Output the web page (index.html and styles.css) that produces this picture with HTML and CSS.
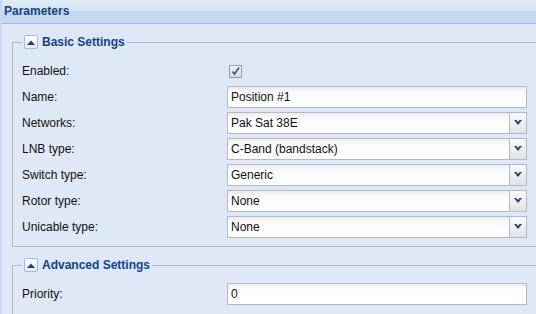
FILE: index.html
```html
<!DOCTYPE html>
<html lang="en">
<head>
    <meta charset="UTF-8">
    <title>Parameters</title>
    <link rel="stylesheet" href="styles.css">
</head>
<body>
    <div class="panel">
        <div class="panel-header">Parameters</div>
        <div class="panel-body">

            <!-- Basic settings -->
            <fieldset class="group">
                <legend><span class="toggle"><svg width="8" height="5" viewBox="0 0 8 5"><polygon points="0,5 4,0.5 8,5" fill="#1e3f7a"/></svg></span>Basic Settings</legend>
                <div class="row">
                    <label>Enabled:</label>
                    <span class="check"><svg width="11" height="11" viewBox="0 0 11 11"><path d="M2.5 5.5 L4.5 8 L9 1.5" fill="none" stroke="#3a5aa6" stroke-width="1.8"/></svg></span>
                </div>
                <div class="row">
                    <label>Name:</label>
                    <div class="field">Position #1</div>
                </div>
                <div class="row">
                    <label>Networks:</label>
                    <div class="field combo">Pak Sat 38E<span class="trigger"></span></div>
                </div>
                <div class="row">
                    <label>LNB type:</label>
                    <div class="field combo">C-Band (bandstack)<span class="trigger"></span></div>
                </div>
                <div class="row">
                    <label>Switch type:</label>
                    <div class="field combo">Generic<span class="trigger"></span></div>
                </div>
                <div class="row">
                    <label>Rotor type:</label>
                    <div class="field combo">None<span class="trigger"></span></div>
                </div>
                <div class="row">
                    <label>Unicable type:</label>
                    <div class="field combo">None<span class="trigger"></span></div>
                </div>
            </fieldset>

            <!-- Advanced settings -->
            <fieldset class="group">
                <legend><span class="toggle"><svg width="8" height="5" viewBox="0 0 8 5"><polygon points="0,5 4,0.5 8,5" fill="#1e3f7a"/></svg></span>Advanced Settings</legend>
                <div class="row">
                    <label>Priority:</label>
                    <div class="field">0</div>
                </div>
            </fieldset>

        </div>
    </div>
</body>
</html>
```

FILE: styles.css
```css
* {
    margin: 0;
    padding: 0;
    box-sizing: border-box;
}

html, body {
    width: 536px;
    height: 314px;
    overflow: hidden;
}

body {
    font-family: "Liberation Sans", Arial, sans-serif;
    font-size: 12px;
    color: #111;
    background: #dfe8f6;
}

.panel {
    border-left: 2px solid #c9d8ee;
    min-height: 314px;
}

.panel-header {
    height: 24px;
    padding: 0 2px;
    line-height: 23px;
    font-weight: bold;
    color: #15428b;
    background: linear-gradient(#e3ecf8 0, #d8e5f6 44%, #c4d8f1 48%, #c6d9f1 100%);
    border-bottom: 1px solid #99bbe8;
}

.panel-body {
    padding-top: 10px;
}

.group {
    border: 1px solid #b5b8c8;
    margin: 0 -4px 10px 10px;
    padding: 10px 0 8px 9px;
}

.group:last-child {
    padding-bottom: 16px;
}

.group legend {
    display: flex;
    align-items: center;
    gap: 4px;
    height: 16px;
    padding: 0 2px;
    font-weight: bold;
    color: #15428b;
}

.toggle {
    width: 14px;
    height: 14px;
    border: 1px solid #a3bde0;
    border-radius: 2px;
    background: linear-gradient(#ffffff 0%, #e4ecf8 100%);
    display: flex;
    align-items: center;
    justify-content: center;
}

.row {
    display: flex;
    align-items: center;
    height: 22px;
    margin-bottom: 4px;
}

.row:last-child {
    margin-bottom: 0;
}

.row label {
    width: 205px;
}

.check {
    width: 13px;
    height: 13px;
    margin-left: 2px;
    border: 1px solid #8e9fba;
    background: linear-gradient(#f4f4f4 0%, #dcdcdc 100%);
    display: flex;
    align-items: center;
    justify-content: center;
}

.field {
    position: relative;
    width: 300px;
    height: 22px;
    line-height: 20px;
    padding: 0 3px;
    border: 1px solid #b5b8c8;
    background: linear-gradient(#ececec 0, #fbfbfb 5px, #ffffff 100%);
}

.trigger {
    position: absolute;
    top: 0;
    right: 0;
    width: 17px;
    height: 20px;
    border-left: 1px solid #b5b8c8;
    background: linear-gradient(#fbfbfb 0%, #e2e2e2 100%);
}

.trigger::after {
    content: "";
    position: absolute;
    left: 4px;
    top: 7px;
    width: 8px;
    height: 5px;
    background: #2a4272;
    clip-path: polygon(0 0, 2.5px 0, 4px 2px, 5.5px 0, 8px 0, 4px 5px);
}
```
